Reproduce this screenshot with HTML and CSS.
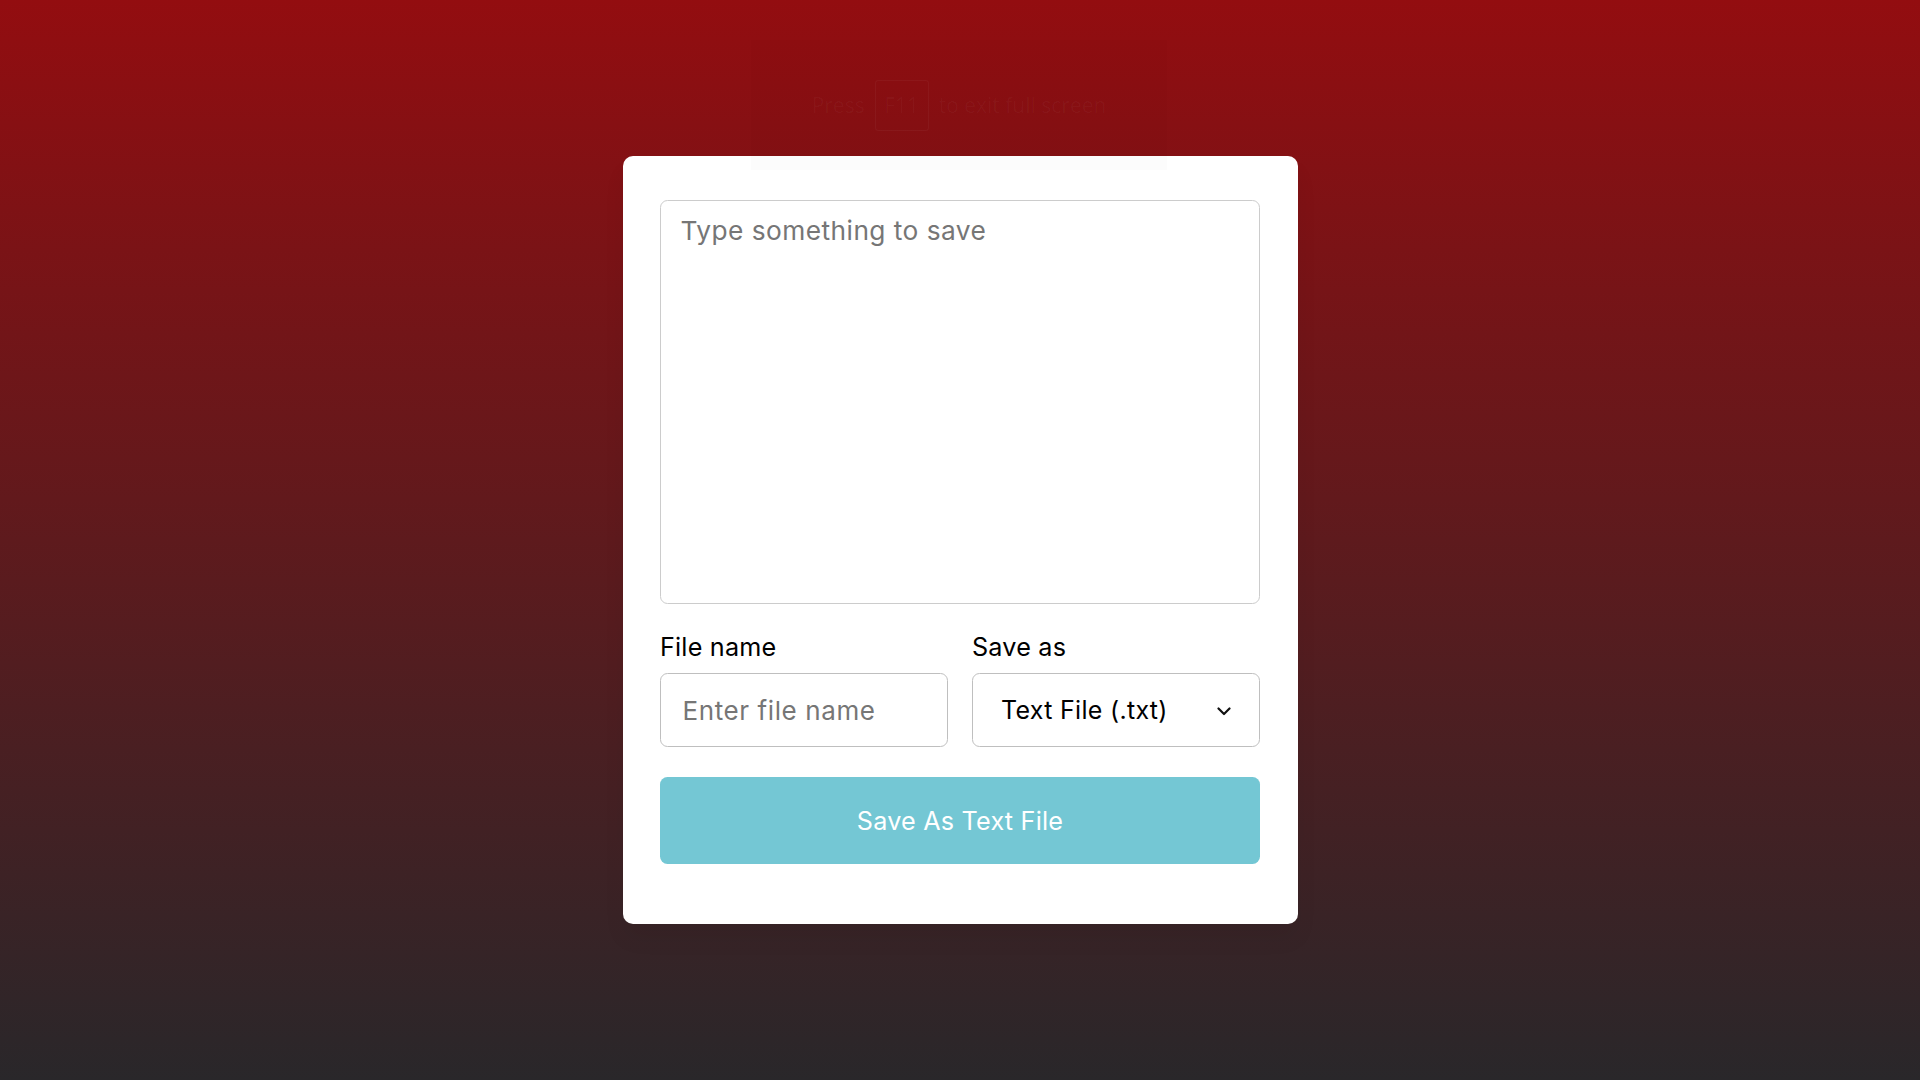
FILE: index.html
```html
<!DOCTYPE html>
<html lang="en">
<head>
<meta charset="utf-8">
<title>Save Text As File</title>
<link rel="stylesheet" href="styles.css">
</head>
<body>
  <div class="fs-hint">
    <span>Press</span>
    <span class="key">F11</span>
    <span>to exit full screen</span>
  </div>
  <div class="wrapper">
    <textarea spellcheck="false" placeholder="Type something to save"></textarea>
    <div class="file-options">
      <div class="option">
        <label>File name</label>
        <input type="text" placeholder="Enter file name">
      </div>
      <div class="option">
        <label>Save as</label>
        <div class="select-menu">
          <select>
            <option>Text File (.txt)</option>
          </select>
          <svg class="chev" width="14" height="9" viewBox="0 0 14 9" aria-hidden="true">
            <path d="M1.5 1.5 L7 7 L12.5 1.5" fill="none" stroke="#111" stroke-width="2.2" stroke-linecap="round" stroke-linejoin="round"/>
          </svg>
        </div>
      </div>
    </div>
    <button class="save-btn">Save As Text File</button>
  </div>
</body>
</html>
```

FILE: styles.css
```css
* {
  margin: 0;
  padding: 0;
  box-sizing: border-box;
}

html, body {
  height: 100%;
}

body {
  min-height: 100vh;
  display: flex;
  align-items: center;
  justify-content: center;
  background: linear-gradient(to bottom, #930d10 0%, #5e1a1d 50%, #29272a 100%);
  font-family: "Inter", "Noto Sans", sans-serif;
}

.fs-hint {
  position: absolute;
  top: 40px;
  left: 751px;
  width: 416px;
  height: 130px;
  display: flex;
  align-items: center;
  justify-content: center;
  gap: 10px;
  background: rgba(0, 0, 0, 0.012);
  font-family: "Open Sans", "Noto Sans", sans-serif;
  font-size: 21px;
  color: rgba(255, 255, 255, 0.035);
}

.fs-hint .key {
  display: flex;
  align-items: center;
  justify-content: center;
  width: 54px;
  height: 51px;
  border: 1.5px solid rgba(255, 255, 255, 0.04);
  border-radius: 3px;
}

.wrapper {
  width: 675px;
  padding: 44px 37.5px 60px;
  background: #fff;
  border-radius: 10px;
  box-shadow: 0 15px 22px rgba(0, 0, 0, 0.05);
}

.wrapper textarea,
.wrapper input,
.wrapper select,
.wrapper button {
  width: 100%;
  outline: none;
  border: none;
  font-family: "Inter", "Noto Sans", sans-serif;
}

.wrapper textarea::placeholder,
.wrapper input::placeholder {
  color: #767676;
  opacity: 1;
}

.wrapper textarea {
  display: block;
  height: 404px;
  resize: none;
  padding: 11px 19.5px;
  font-size: 26.3px;
  line-height: 38px;
  letter-spacing: 0.45px;
  border: 1.5px solid #cccccc;
  border-radius: 7.5px;
}

.file-options {
  display: flex;
  justify-content: space-between;
  margin-top: 24.4px;
}

.option {
  width: 288px;
  display: flex;
  flex-direction: column;
}

.option label {
  font-size: 25.2px;
  line-height: 38px;
  color: #000;
  letter-spacing: 0.2px;
}

.option input,
.option .select-menu {
  height: 73.5px;
  margin-top: 7.5px;
  border: 1.5px solid #bfbfbf;
  border-radius: 7.5px;
}

.option input {
  padding: 0 21.5px;
  font-size: 26px;
  letter-spacing: 0.6px;
}

.select-menu {
  display: flex;
  align-items: center;
  padding: 0 28px 0 28px;
}

.select-menu select {
  flex: 1;
  appearance: none;
  -webkit-appearance: none;
  background: none;
  font-size: 25px;
  color: #000;
  letter-spacing: 0.3px;
}

.select-menu .chev {
  flex: none;
  margin-top: 2px;
}

.save-btn {
  display: block;
  height: 87px;
  margin-top: 30.6px;
  border-radius: 7.5px;
  background: #74c7d4;
  color: #fff;
  font-size: 25.2px;
  letter-spacing: 0.2px;
}
```
